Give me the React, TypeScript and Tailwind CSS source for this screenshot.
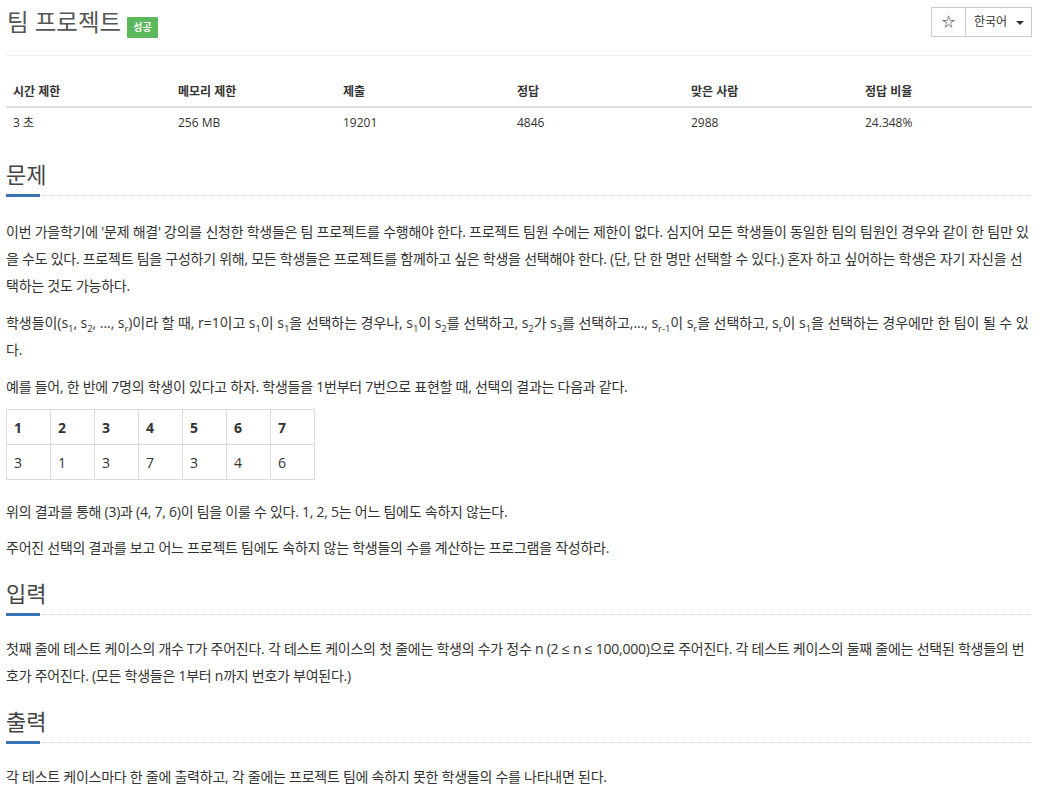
import React from "react";

const font = { fontFamily: '"Open Sans", "Noto Sans CJK KR", sans-serif' };

function Sub({ children }: { children: React.ReactNode }) {
  return <sub className="text-[9.5px] leading-none align-[-2px]">{children}</sub>;
}

function SectionTitle({ children, first }: { children: React.ReactNode; first?: boolean }) {
  return (
    <div className={first ? "mt-[20px] mb-[21px]" : "mt-[17px] mb-[19px]"}>
      <h2 className="text-[22px] leading-[30px] text-[#444] pb-[5px]">{children}</h2>
      <div className="relative h-[3px]">
        <div className="absolute left-0 right-0 top-[1px] border-t border-dotted border-[#ddd]" />
        <div className="absolute left-0 top-0 w-[34px] h-[3px] bg-[#3b73b9]" />
      </div>
    </div>
  );
}

export default function App() {
  const stats = [
    ["시간 제한", "3 초"],
    ["메모리 제한", "256 MB"],
    ["제출", "19201"],
    ["정답", "4846"],
    ["맞은 사람", "2988"],
    ["정답 비율", "24.348%"],
  ];
  const widths = ["w-[165px]", "w-[165px]", "w-[174px]", "w-[174px]", "w-[174px]", ""];
  return (
    <div className="min-h-screen bg-white text-[#333] pl-[6px] pr-[15px]" style={font}>
      <div className="flex items-start justify-between border-b border-[#eee] h-[56px]">
        <div className="flex items-center pt-[6px]">
          <h1 className="text-[23.5px] leading-[32px] text-[#555] ml-[1px]">팀 프로젝트</h1>
          <span className="ml-[6px] mt-[10px] bg-[#5cb85c] text-white text-[10px] font-bold leading-[21px] px-[6px] rounded-[1px]">성공</span>
        </div>
        <div className="flex mt-[7px] border border-[#ccc] h-[30px] text-[12px] text-[#333]">
          <div className="w-[34px] flex items-center justify-center border-r border-[#ccc] text-[13px]">☆</div>
          <div className="w-[65px] flex items-center pl-[8px] gap-[9px]">
            <span>한국어</span>
            <span className="w-0 h-0 border-l-[4px] border-r-[4px] border-t-[4px] border-l-transparent border-r-transparent border-t-[#333] mt-[2px]" />
          </div>
        </div>
      </div>

      <table className="w-full mt-[18px] text-[12px] border-collapse">
        <thead>
          <tr className="border-b-2 border-[#ddd]">
            {stats.map((s, i) => (
              <th key={i} className={`text-left font-bold pt-[9px] pb-[6px] px-[7px] leading-[17px] ${widths[i]}`}>{s[0]}</th>
            ))}
          </tr>
        </thead>
        <tbody>
          <tr>
            {stats.map((s, i) => (
              <td key={i} className="text-left pt-[6px] pb-[8px] px-[7px] leading-[17px]">{s[1]}</td>
            ))}
          </tr>
        </tbody>
      </table>

      <SectionTitle first>문제</SectionTitle>
      <div className="text-[14px] leading-[27px] tracking-[-0.25px]">
        <p className="mb-[10px]">
          이번 가을학기에 '문제 해결' 강의를 신청한 학생들은 팀 프로젝트를 수행해야 한다. 프로젝트 팀원 수에는 제한이 없다. 심지어 모든 학생들이 동일한 팀의 팀원인 경우와 같이 한 팀만 있을 수도 있다. 프로젝트 팀을 구성하기 위해, 모든 학생들은 프로젝트를 함께하고 싶은 학생을 선택해야 한다. (단, 단 한 명만 선택할 수 있다.) 혼자 하고 싶어하는 학생은 자기 자신을 선택하는 것도 가능하다.
        </p>
        <p className="mb-[10px] tracking-[-0.05px]">
          학생들이(s<Sub>1</Sub>, s<Sub>2</Sub>, ..., s<Sub>r</Sub>)이라 할 때, r=1이고 s<Sub>1</Sub>이 s<Sub>1</Sub>을 선택하는 경우나, s<Sub>1</Sub>이 s<Sub>2</Sub>를 선택하고, s<Sub>2</Sub>가 s<Sub>3</Sub>를 선택하고,..., s<Sub>r-1</Sub>이 s<Sub>r</Sub>을 선택하고, s<Sub>r</Sub>이 s<Sub>1</Sub>을 선택하는 경우에만 한 팀이 될 수 있다.
        </p>
        <p className="mb-[9px]">예를 들어, 한 반에 7명의 학생이 있다고 하자. 학생들을 1번부터 7번으로 표현할 때, 선택의 결과는 다음과 같다.</p>
        <table className="border-collapse mb-[18px] tracking-normal">
          <tbody>
            <tr>
              {[1, 2, 3, 4, 5, 6, 7].map((n) => (
                <td key={n} className="border border-[#ddd] w-[44px] h-[35px] px-[7px] font-bold">{n}</td>
              ))}
            </tr>
            <tr>
              {[3, 1, 3, 7, 3, 4, 6].map((n, i) => (
                <td key={i} className="border border-[#ddd] w-[44px] h-[35px] px-[7px]">{n}</td>
              ))}
            </tr>
          </tbody>
        </table>
        <p className="mb-[9px]">위의 결과를 통해 (3)과 (4, 7, 6)이 팀을 이룰 수 있다. 1, 2, 5는 어느 팀에도 속하지 않는다.</p>
        <p className="mb-[9px]">주어진 선택의 결과를 보고 어느 프로젝트 팀에도 속하지 않는 학생들의 수를 계산하는 프로그램을 작성하라.</p>
      </div>

      <SectionTitle>입력</SectionTitle>
      <div className="text-[14px] leading-[27px] tracking-[-0.25px]">
        <p className="mb-[9px]">
          첫째 줄에 테스트 케이스의 개수 T가 주어진다. 각 테스트 케이스의 첫 줄에는 학생의 수가 정수 n (2 ≤ n ≤ 100,000)으로 주어진다. 각 테스트 케이스의 둘째 줄에는 선택된 학생들의 번호가 주어진다. (모든 학생들은 1부터 n까지 번호가 부여된다.)
        </p>
      </div>

      <SectionTitle>출력</SectionTitle>
      <div className="text-[14px] leading-[27px] tracking-[-0.25px]">
        <p className="mb-[9px]">각 테스트 케이스마다 한 줄에 출력하고, 각 줄에는 프로젝트 팀에 속하지 못한 학생들의 수를 나타내면 된다.</p>
      </div>
    </div>
  );
}
